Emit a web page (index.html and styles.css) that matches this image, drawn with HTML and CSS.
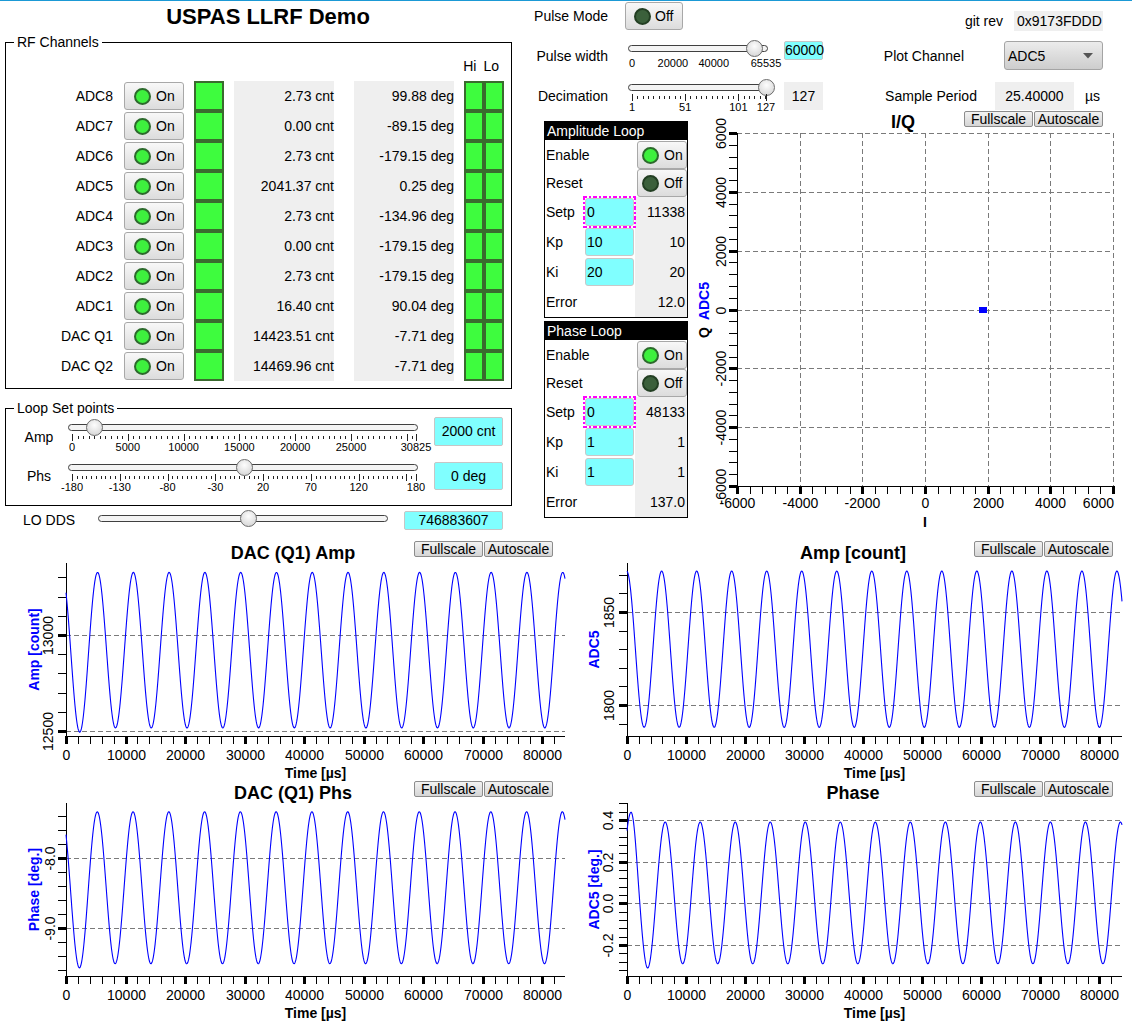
FILE: index.html
```html
<!DOCTYPE html>
<html lang="en">
<head>
<meta charset="utf-8">
<title>USPAS LLRF Demo</title>
<link rel="stylesheet" href="styles.css">
</head>
<body>
<div class="app">
  <div class="top">
    <div class="left">
      <div class="title">USPAS LLRF Demo</div>
      <fieldset class="group rf">
        <legend>RF Channels</legend>
        <div class="hilo-head"><span>Hi</span><span>Lo</span></div>
        <div class="rf-row"><span class="ch">ADC8</span><div class="tbtn rfb"><i class="led on"></i>On</div><span class="stat"></span><span class="val amp">2.73 cnt</span><span class="val phs">99.88 deg</span><span class="hl"><i></i><i></i></span></div>
        <div class="rf-row"><span class="ch">ADC7</span><div class="tbtn rfb"><i class="led on"></i>On</div><span class="stat"></span><span class="val amp">0.00 cnt</span><span class="val phs">-89.15 deg</span><span class="hl"><i></i><i></i></span></div>
        <div class="rf-row"><span class="ch">ADC6</span><div class="tbtn rfb"><i class="led on"></i>On</div><span class="stat"></span><span class="val amp">2.73 cnt</span><span class="val phs">-179.15 deg</span><span class="hl"><i></i><i></i></span></div>
        <div class="rf-row"><span class="ch">ADC5</span><div class="tbtn rfb"><i class="led on"></i>On</div><span class="stat"></span><span class="val amp">2041.37 cnt</span><span class="val phs">0.25 deg</span><span class="hl"><i></i><i></i></span></div>
        <div class="rf-row"><span class="ch">ADC4</span><div class="tbtn rfb"><i class="led on"></i>On</div><span class="stat"></span><span class="val amp">2.73 cnt</span><span class="val phs">-134.96 deg</span><span class="hl"><i></i><i></i></span></div>
        <div class="rf-row"><span class="ch">ADC3</span><div class="tbtn rfb"><i class="led on"></i>On</div><span class="stat"></span><span class="val amp">0.00 cnt</span><span class="val phs">-179.15 deg</span><span class="hl"><i></i><i></i></span></div>
        <div class="rf-row"><span class="ch">ADC2</span><div class="tbtn rfb"><i class="led on"></i>On</div><span class="stat"></span><span class="val amp">2.73 cnt</span><span class="val phs">-179.15 deg</span><span class="hl"><i></i><i></i></span></div>
        <div class="rf-row"><span class="ch">ADC1</span><div class="tbtn rfb"><i class="led on"></i>On</div><span class="stat"></span><span class="val amp">16.40 cnt</span><span class="val phs">90.04 deg</span><span class="hl"><i></i><i></i></span></div>
        <div class="rf-row"><span class="ch">DAC Q1</span><div class="tbtn rfb"><i class="led on"></i>On</div><span class="stat"></span><span class="val amp">14423.51 cnt</span><span class="val phs">-7.71 deg</span><span class="hl"><i></i><i></i></span></div>
        <div class="rf-row"><span class="ch">DAC Q2</span><div class="tbtn rfb"><i class="led on"></i>On</div><span class="stat"></span><span class="val amp">14469.96 cnt</span><span class="val phs">-7.71 deg</span><span class="hl"><i></i><i></i></span></div>
      </fieldset>

      <fieldset class="group setp">
        <legend>Loop Set points</legend>
        <div class="sp-row">
          <span class="sp-lbl">Amp</span>
          <div class="slider sl-wide" style="--p:0.0649">
            <div class="track-area"><div class="track"></div><span class="knob"></span></div>
            <div class="ticks t-amp"></div>
            <div class="slabels"><span style="--p:0">0</span><span style="--p:0.1622">5000</span><span style="--p:0.3244">10000</span><span style="--p:0.4866">15000</span><span style="--p:0.6488">20000</span><span style="--p:0.8110">25000</span><span style="--p:1">30825</span></div>
          </div>
          <span class="cyan-box sp-box">2000 cnt</span>
        </div>
        <div class="sp-row second">
          <span class="sp-lbl">Phs</span>
          <div class="slider sl-wide" style="--p:0.5">
            <div class="track-area"><div class="track"></div><span class="knob"></span></div>
            <div class="ticks t-phs"></div>
            <div class="slabels"><span style="--p:0">-180</span><span style="--p:0.1389">-130</span><span style="--p:0.2778">-80</span><span style="--p:0.4167">-30</span><span style="--p:0.5556">20</span><span style="--p:0.6944">70</span><span style="--p:0.8333">120</span><span style="--p:1">180</span></div>
          </div>
          <span class="cyan-box sp-box">0 deg</span>
        </div>
      </fieldset>

      <div class="lodds">
        <span class="dds-l">LO DDS</span>
        <div class="slider sl-dds" style="--p:0.521">
          <div class="track-area"><div class="track"></div><span class="knob"></span></div>
        </div>
        <span class="cyan-box dds-box">746883607</span>
      </div>
    </div>

    <div class="right">
      <div class="ctl-row r1">
        <span class="ctl-l">Pulse Mode</span>
        <div class="tbtn pm"><i class="led off"></i>Off</div>
        <span class="git-l">git rev</span>
        <span class="gbox git">0x9173FDDD</span>
      </div>
      <div class="ctl-row r2">
        <span class="ctl-l">Pulse width</span>
        <div class="slider sl-pw" style="--p:0.9155">
          <div class="track-area"><div class="track"></div><span class="knob"></span></div>
          <div class="slabels"><span style="--p:0">0</span><span style="--p:0.3052">20000</span><span style="--p:0.6104">40000</span><span style="--p:1">65535</span></div>
        </div>
        <span class="cyan-box pw-box">60000</span>
        <span class="pc-l">Plot Channel</span>
        <div class="combo"><span>ADC5</span><svg class="arrow" width="10" height="6" viewBox="0 0 10 6"><polygon points="0,0 10,0 5,5.5" fill="#555"/></svg></div>
      </div>
      <div class="ctl-row r3">
        <span class="ctl-l">Decimation</span>
        <div class="slider sl-dec" style="--p:1">
          <div class="track-area"><div class="track"></div><span class="knob"></span></div>
          <div class="ticks t-dec"></div>
          <div class="slabels"><span style="--p:0">1</span><span style="--p:0.3968">51</span><span style="--p:0.7937">101</span><span style="--p:1">127</span></div>
        </div>
        <span class="gbox dec-box">127</span>
        <span class="sp-l">Sample Period</span>
        <span class="gbox per-box">25.40000</span>
        <span class="unit">µs</span>
      </div>

      <div class="lower">
        <div class="loops">
          <div class="loop">
            <div class="loop-head">Amplitude Loop</div>
            <div class="loop-grid">
              <span class="ll">Enable</span><span></span><div class="tbtn lb"><i class="led on"></i>On</div>
              <span class="ll">Reset</span><span></span><div class="tbtn lb"><i class="led off"></i>Off</div>
              <span class="ll">Setp</span><span class="inp focus">0</span><span class="lv">11338</span>
              <span class="ll">Kp</span><span class="inp">10</span><span class="lv">10</span>
              <span class="ll">Ki</span><span class="inp">20</span><span class="lv">20</span>
              <span class="ll">Error</span><span></span><span class="lv">12.0</span>
            </div>
          </div>
          <div class="loop">
            <div class="loop-head">Phase Loop</div>
            <div class="loop-grid">
              <span class="ll">Enable</span><span></span><div class="tbtn lb"><i class="led on"></i>On</div>
              <span class="ll">Reset</span><span></span><div class="tbtn lb"><i class="led off"></i>Off</div>
              <span class="ll">Setp</span><span class="inp focus">0</span><span class="lv">48133</span>
              <span class="ll">Kp</span><span class="inp">1</span><span class="lv">1</span>
              <span class="ll">Ki</span><span class="inp">1</span><span class="lv">1</span>
              <span class="ll">Error</span><span></span><span class="lv">137.0</span>
            </div>
          </div>
        </div>

        <div class="iq">
          <div class="plot-head">
            <span class="ptitle">I/Q</span>
            <div class="sbtns"><span class="sbtn">Fullscale</span><span class="sbtn">Autoscale</span></div>
          </div>
          <svg id="iq" class="pl" width="442" height="407"></svg>
        </div>
      </div>
    </div>
  </div>

  <div class="plots">
    <div class="tp tl">
      <div class="plot-head"><span class="ptitle">DAC (Q1) Amp</span><div class="sbtns"><span class="sbtn">Fullscale</span><span class="sbtn">Autoscale</span></div></div>
      <svg id="p1" class="pl" width="566" height="212"></svg>
    </div>
    <div class="tp tr">
      <div class="plot-head"><span class="ptitle">Amp [count]</span><div class="sbtns"><span class="sbtn">Fullscale</span><span class="sbtn">Autoscale</span></div></div>
      <svg id="p2" class="pl" width="566" height="212"></svg>
    </div>
    <div class="tp tl">
      <div class="plot-head"><span class="ptitle">DAC (Q1) Phs</span><div class="sbtns"><span class="sbtn">Fullscale</span><span class="sbtn">Autoscale</span></div></div>
      <svg id="p3" class="pl" width="566" height="212"></svg>
    </div>
    <div class="tp tr">
      <div class="plot-head"><span class="ptitle">Phase</span><div class="sbtns"><span class="sbtn">Fullscale</span><span class="sbtn">Autoscale</span></div></div>
      <svg id="p4" class="pl" width="566" height="212"></svg>
    </div>
  </div>
</div>
<script src="script.js"></script>
</body>
</html>
```

FILE: styles.css
```css
* { box-sizing: border-box; }
html, body { margin: 0; padding: 0; }
body {
  font-family: "Liberation Sans", Arial, sans-serif;
  font-size: 14px;
  color: #000;
  background: linear-gradient(#1b99d5, #1b99d5) 0 0 / 100% 1px no-repeat, #fff;
}
.app { width: 1132px; height: 1031px; overflow: hidden; }
.top { display: flex; height: 535px; }
.left { width: 520px; }
.right { width: 612px; }

.title {
  height: 34px; line-height: 34px; font-size: 22px; font-weight: bold;
  text-align: center; padding-left: 16px;
}

/* group boxes */
.group { margin: 0 0 0 5px; width: 507px; min-width: 0; padding: 0; border: 1px solid #000; }
.group legend { padding: 0 3px; margin-left: 8px; font-size: 14px; line-height: 16px; }
.rf { padding-bottom: 7px; }
.setp { margin-top: 11px; padding-bottom: 9px; }

.hilo-head { display: flex; justify-content: flex-end; gap: 7px; padding-right: 12px; margin: 8px 0 7px; height: 16px; line-height: 16px; }
.rf-row { display: flex; height: 30px; }
.ch { width: 107px; margin-right: 11px; text-align: right; line-height: 30px; }

.tbtn {
  display: flex; align-items: center;
  border: 1px solid #a8a8a8; border-radius: 3px;
  background: linear-gradient(#f8f8f8, #dcdcdc);
}
.led { display: block; width: 17px; height: 17px; border-radius: 50%; border: 2px solid #2c6a2c; flex: none; }
.led.on { background: #3ef03e; }
.led.off { background: #3b603b; border-color: #233f23; }
.rfb { width: 60px; height: 28px; margin: 1px 10px 1px 0; padding-left: 9px; gap: 5px; }

.stat { width: 30px; margin-right: 10px; border: 2px solid #3a6b2e; background: #3efc3e; }
.val { width: 100px; background: #efefef; text-align: right; line-height: 30px; white-space: nowrap; }
.val.amp { margin-right: 20px; }
.val.phs { margin-right: 10px; }
.hl { display: flex; }
.hl i { width: 20px; border: 2px solid #3a6b2e; background: #3efc3e; }

/* sliders */
.slider { position: relative; --a: 4px; --w: 100px; flex: none; }
.track-area { position: relative; height: 13px; display: flex; align-items: center; }
.track { flex: 1; height: 7px; border: 1px solid #404040; border-radius: 4px; background: #f4f4f4; }
.knob {
  position: absolute; top: 50%; left: calc(var(--a) + var(--p) * var(--w));
  width: 17px; height: 17px; margin: -8.5px 0 0 -8.5px; border-radius: 50%;
  border: 1px solid #6c6c6c;
  background: radial-gradient(circle at 50% 35%, #fdfdfd, #d6d6d6 85%);
}
.ticks { position: relative; height: 7px; margin-left: var(--a); width: calc(var(--w) + 1px); }
.ticks::after { content: ""; position: absolute; right: 0; top: 0; width: 1px; height: 7px; background: #222; }
.t-amp {
  background:
    repeating-linear-gradient(90deg, #222 0 1px, transparent 1px 5.58px) 0 2px / 100% 3px no-repeat,
    repeating-linear-gradient(90deg, #222 0 1px, transparent 1px 55.8px) 0 0 / 100% 7px no-repeat;
}
.t-phs {
  background:
    repeating-linear-gradient(90deg, #222 0 1px, transparent 1px 4.778px) 0 2px / 100% 3px no-repeat,
    repeating-linear-gradient(90deg, #222 0 1px, transparent 1px 47.78px) 0 0 / 100% 7px no-repeat;
}
.t-dec {
  background:
    repeating-linear-gradient(90deg, #222 0 1px, transparent 1px 5.317px) 0 2px / 100% 3px no-repeat,
    repeating-linear-gradient(90deg, #222 0 1px, transparent 1px 53.17px) 0 0 / 100% 7px no-repeat;
}
.slabels { position: relative; height: 12px; margin-left: var(--a); width: var(--w); font-size: 11px; line-height: 12px; }
.slabels span { position: absolute; top: 0; left: calc(var(--p) * 100%); transform: translateX(-50%); white-space: nowrap; }

.sl-wide { width: 350px; --w: 344px; margin-top: 5px; }
.sl-pw { width: 140px; --w: 134px; margin: 7px 0 0 13px; }
.sl-pw .track-area { height: 14px; }
.sl-pw .slabels { margin-top: 2px; }
.sl-dec { width: 145px; --w: 134px; margin: 9px 0 0 13px; }
.sl-dds { width: 290px; --w: 282px; margin: 5px 0 0 23px; }
.sl-dds .track-area { height: 14px; }

.cyan-box { background: #80ffff; border: 1px solid #c6c6c6; border-radius: 2px; text-align: center; white-space: nowrap; }
.gbox { background: #efefef; white-space: nowrap; }

.sp-row { display: flex; align-items: flex-start; height: 40px; }
.sp-lbl { width: 58px; margin: 13px 0 0 4px; text-align: center; line-height: 16px; }
.sp-row.second .sp-lbl { margin-top: 12px; }
.sp-box { margin: 1px 0 0 16px; width: 69px; height: 29px; line-height: 27px; }
.sp-row.second .sp-box { margin-top: 6px; height: 28px; line-height: 26px; }

.lodds { display: flex; align-items: flex-start; height: 29px; }
.dds-l { width: 52px; margin: 6px 0 0 23px; line-height: 16px; white-space: nowrap; }
.dds-box { margin: 5px 0 0 16px; width: 99px; height: 19px; line-height: 17px; }

/* right top controls */
.ctl-row { display: flex; align-items: flex-start; }
.r1 { height: 34px; }
.r2, .r3 { height: 38px; }
.ctl-l { width: 95px; padding-right: 7px; text-align: right; line-height: 16px; white-space: nowrap; flex: none; }
.r1 .ctl-l { margin-top: 8px; }
.r2 .ctl-l { margin-top: 14px; }
.r3 .ctl-l { margin-top: 16px; }
.pm { width: 58px; height: 28px; margin: 2px 0 0 10px; padding-left: 8px; gap: 4px; }
.git-l { margin: 13px 11px 0 auto; line-height: 16px; }
.git { width: 89px; height: 20px; line-height: 20px; margin: 11px 29px 0 0; padding-left: 3px; }
.pw-box { width: 39px; height: 19px; line-height: 17px; margin: 7px 0 0 16px; overflow: visible; }
.pc-l { margin: 14px 40px 0 auto; line-height: 16px; }
.combo {
  width: 99px; height: 29px; margin: 7px 29px 0 0; padding: 0 9px 0 3px;
  display: flex; align-items: center; justify-content: space-between;
  border: 1px solid #a4a4a4; border-radius: 3px;
  background: linear-gradient(#ececec, #cdcdcd);
}
.dec-box { width: 39px; height: 28px; line-height: 28px; margin: 10px 0 0 11px; text-align: center; }
.sp-l { margin: 16px 18px 0 auto; line-height: 16px; }
.per-box { width: 79px; height: 28px; line-height: 28px; margin-top: 10px; text-align: center; }
.unit { margin: 16px 32px 0 11px; line-height: 16px; }

/* loops */
.lower { display: flex; align-items: flex-start; }
.loops { margin: 11px 0 0 24px; width: 144px; display: flex; flex-direction: column; gap: 3px; flex: none; }
.loop { border: 1px solid #000; height: 197px; }
.loop-head { background: #000; color: #fff; height: 18px; line-height: 18px; padding-left: 2px; }
.loop-grid { display: grid; grid-template-columns: 39px 51px 52px; grid-template-rows: 29px 28px 30px 30px 30px 30px; }
.ll { padding-left: 1px; align-self: center; }
.lb { width: 50px; height: 28px; margin-left: 2px; padding-left: 4px; gap: 5px; align-self: end; }
.inp {
  position: relative; margin: 1px 0 1px 1px; width: 49px; height: 28px;
  background: #80ffff; border: 1px solid #c8c8c8; border-radius: 3px;
  line-height: 26px; padding-left: 1px;
}
.inp.focus::after {
  content: ""; position: absolute; inset: -3px;
  background:
    repeating-linear-gradient(90deg, #f0f 0 4px, transparent 4px 6px, #f0f 6px 8px, transparent 8px 10px) 0 0 / 100% 2px no-repeat,
    repeating-linear-gradient(90deg, #f0f 0 4px, transparent 4px 6px, #f0f 6px 8px, transparent 8px 10px) 0 100% / 100% 2px no-repeat,
    repeating-linear-gradient(180deg, #f0f 0 4px, transparent 4px 6px, #f0f 6px 8px, transparent 8px 10px) 0 0 / 2px 100% no-repeat,
    repeating-linear-gradient(180deg, #f0f 0 4px, transparent 4px 6px, #f0f 6px 8px, transparent 8px 10px) 100% 0 / 2px 100% no-repeat;
}
.lv { background: #efefef; text-align: right; padding-right: 2px; line-height: 30px; }

/* plots */
.iq { margin-left: 2px; width: 442px; flex: none; }
.plot-head { display: grid; height: 18px; grid-template-rows: 18px; }
.plot-head > * { grid-area: 1 / 1; }
.ptitle { font-weight: bold; font-size: 18px; line-height: 24px; justify-self: center; white-space: nowrap; }
.iq .ptitle { padding-right: 16px; }
.sbtns { justify-self: end; display: flex; gap: 1px; margin: 1px 29px 0 0; height: 16px; }
.sbtn {
  width: 69px; height: 16px; line-height: 14px; text-align: center;
  border: 1px solid #8c8c8c; border-radius: 2px;
  background: linear-gradient(#f3f3f3, #d5d5d5);
}
svg.pl { display: block; overflow: visible; }

.plots { display: grid; grid-template-columns: 566px 566px; grid-template-rows: 240px 240px; }
.tp .plot-head { height: 28px; grid-template-rows: 28px; }
.tp .ptitle { line-height: 20px; margin-top: 8px; align-self: start; }
.tp .sbtns { margin-top: 6px; align-self: start; }
.tl .ptitle { padding-left: 20px; }
.tr .ptitle { padding-left: 8px; }
.tl .sbtns { margin-right: 13px; }
.tr .sbtns { margin-right: 19px; }

.gridl line { stroke: #7a7a7a; stroke-width: 1; stroke-dasharray: 5 3; fill: none; }
.tk line { stroke: #000; }
.tk .mj { stroke-width: 3; }
.tk .mn { stroke-width: 1; }
.axis { stroke: #000; stroke-width: 1; }
.tlab text { font-family: "Liberation Sans", Arial, sans-serif; font-size: 14px; fill: #000; }
.ytitle { font-family: "Liberation Sans", Arial, sans-serif; font-size: 14px; font-weight: bold; fill: #0000ff; }
.ytitle .blk { fill: #000; }
.xtitle { font-family: "Liberation Sans", Arial, sans-serif; font-size: 14px; font-weight: bold; fill: #000; }
.wave { fill: none; stroke: #0000ff; stroke-width: 1.1; }
.marker { fill: #0000ff; }
```

FILE: script.js
```js
(function () {
  var NS = 'http://www.w3.org/2000/svg';
  function mk(tag, attrs, parent, text) {
    var e = document.createElementNS(NS, tag);
    for (var k in attrs) e.setAttribute(k, attrs[k]);
    if (text != null) e.textContent = text;
    parent.appendChild(e);
    return e;
  }
  function lin(a, b) { var s = (b[1] - a[1]) / (b[0] - a[0]); return function (v) { return a[1] + (v - a[0]) * s; }; }
  function inv(a, b) { var s = (b[0] - a[0]) / (b[1] - a[1]); return function (p) { return a[0] + (p - a[1]) * s; }; }
  function isMul(v, m) { var r = v / m; return Math.abs(r - Math.round(r)) < 1e-6; }
  function fmt(v, d) { if (Math.abs(v) < 1e-9) v = 0; return v.toFixed(d); }
  function px(v) { return Math.round(v) + 0.5; }

  function plot(svg, c) {
    var X = lin(c.xa, c.xb), Y = lin(c.ya, c.yb);
    var xi = inv(c.xa, c.xb), yi = inv(c.ya, c.yb);
    var L = c.L, R = c.R, T = c.T, B = c.B;
    var grid = mk('g', { 'class': 'gridl' }, svg);
    var tk = mk('g', { 'class': 'tk' }, svg);
    var labs = mk('g', { 'class': 'tlab' }, svg);
    var i, v, maj, k0, k1;

    var ylo = yi(B), yhi = yi(T);
    k0 = Math.ceil(ylo / c.yMinor - 1e-6); k1 = Math.floor(yhi / c.yMinor + 1e-6);
    for (i = k0; i <= k1; i++) {
      v = i * c.yMinor; var y = px(Y(v)); maj = isMul(v, c.yMajor);
      mk('line', { x1: L - 8, x2: L, y1: y, y2: y, 'class': maj ? 'mj' : 'mn' }, tk);
      if (maj) {
        mk('line', { x1: L, x2: R, y1: y, y2: y }, grid);
        var lx = c.yLabX + 5;
        mk('text', { x: lx, y: y, transform: 'rotate(-90 ' + lx + ' ' + y + ')', 'text-anchor': 'middle' }, labs, fmt(v, c.yDec));
      }
    }
    var xlo = xi(L), xhi = xi(R);
    k0 = Math.ceil(xlo / c.xMinor - 1e-6); k1 = Math.floor(xhi / c.xMinor + 1e-6);
    for (i = k0; i <= k1; i++) {
      v = i * c.xMinor; var x = px(X(v)); maj = isMul(v, c.xMajor);
      if (x > R + 1) continue;
      mk('line', { x1: x, x2: x, y1: B, y2: B + 8, 'class': maj ? 'mj' : 'mn' }, tk);
      if (maj) {
        if (c.gridX) mk('line', { x1: x, x2: x, y1: T, y2: B }, grid);
        var lab = fmt(v, 0);
        var anchor = 'middle', tx = x;
        if (c.endAnchor && Math.abs(x - R) < 2) { anchor = 'end'; tx = R + 1; }
        mk('text', { x: tx, y: c.xLabY, 'text-anchor': anchor }, labs, lab);
      }
    }
    mk('line', { x1: px(L), x2: px(L), y1: T, y2: px(B), 'class': 'axis' }, svg);
    mk('line', { x1: px(L), x2: R, y1: px(B), y2: px(B), 'class': 'axis' }, svg);

    var cx = (L + R) / 2;
    mk('text', { x: cx, y: c.xTitleY, 'text-anchor': 'middle', 'class': 'xtitle' }, svg, c.xTitle);
    if (c.yTitle) {
      var tx2 = c.yTitleX + 5, ty = (T + B) / 2;
      mk('text', { x: tx2, y: ty, transform: 'rotate(-90 ' + tx2 + ' ' + ty + ')', 'text-anchor': 'middle', 'class': 'ytitle' }, svg, c.yTitle);
    }

    if (c.f) {
      var pts = [], N = 1400;
      for (i = 0; i <= N; i++) {
        var t = c.tmax * i / N;
        pts.push(X(t).toFixed(2) + ',' + Y(c.f(t)).toFixed(2));
      }
      mk('polyline', { points: pts.join(' '), 'class': 'wave' }, svg);
    }
    return { X: X, Y: Y };
  }

  var TMAX = 83820, DP = 6010, AP = 5930;
  function cw(t, p, t0) { return Math.cos(2 * Math.PI * (t - t0) / p); }
  function g(t, c, w) { var z = (t - c) / w; return Math.exp(-z * z); }

  var base = { T: 0, B: 173, xMajor: 10000, xMinor: 2000, gridX: false, xLabY: 197, xTitle: 'Time [\u00b5s]', xTitleY: 215, tmax: TMAX };
  function ext(o) { var r = {}, k; for (k in base) r[k] = base[k]; for (k in o) r[k] = o[k]; return r; }

  plot(document.getElementById('p1'), ext({
    L: 66, R: 565, xa: [0, 66], xb: [TMAX, 565], ya: [13000, 72], yb: [12500, 168],
    yMajor: 500, yMinor: 100, yDec: 0, yLabX: 48, yTitle: 'Amp [count]', yTitleX: 34,
    f: function (t) { return 12921 + 405 * cw(t, DP, 5305) - 22 * g(t, 2400, 1300); }
  }));
  plot(document.getElementById('p2'), ext({
    L: 61, R: 556, xa: [0, 61], xb: [TMAX, 556], ya: [1850, 49], yb: [1800, 142],
    yMajor: 50, yMinor: 10, yDec: 0, yLabX: 43, yTitle: 'ADC5', yTitleX: 28,
    f: function (t) { return 1830 + 42 * cw(t, AP, -60); }
  }));
  plot(document.getElementById('p3'), ext({
    L: 66, R: 565, xa: [0, 66], xb: [TMAX, 565], ya: [-8, 55], yb: [-9, 125],
    yMajor: 1, yMinor: 0.2, yDec: 1, yLabX: 50, yTitle: 'Phase [deg.]', yTitleX: 34,
    f: function (t) { return -8.425 + 1.085 * cw(t, DP, 5250) - 0.06 * g(t, 2400, 1300); }
  }));
  plot(document.getElementById('p4'), ext({
    L: 61, R: 556, xa: [0, 61], xb: [TMAX, 556], ya: [0.4, 17], yb: [-0.2, 142],
    yMajor: 0.2, yMinor: 0.04, yDec: 1, yLabX: 42, yTitle: 'ADC5 [deg.]', yTitleX: 28,
    f: function (t) { return 0.05 + 0.34 * cw(t, AP, 537) + 0.06 * g(t, 1000, 800) - 0.02 * g(t, 3500, 900); }
  }));

  var iq = document.getElementById('iq');
  var m = plot(iq, {
    L: 47, R: 423, T: 5, B: 358, xa: [-6000, 47], xb: [6000, 423], ya: [6000, 5], yb: [-6000, 358],
    xMajor: 2000, xMinor: 400, yMajor: 2000, yMinor: 400, yDec: 0, gridX: true, endAnchor: true,
    yLabX: 31, xLabY: 380, xTitle: 'I', xTitleY: 399
  });
  var qt = mk('text', { x: 19, y: 210, transform: 'rotate(-90 19 210)', 'class': 'ytitle' }, iq);
  mk('tspan', { 'class': 'blk' }, qt, 'Q');
  mk('tspan', { dx: 7 }, qt, 'ADC5');
  var mx = m.X(1850), my = m.Y(0);
  mk('rect', { x: Math.round(mx - 4), y: Math.round(my - 3), width: 8, height: 6, 'class': 'marker' }, iq);
})();
```
